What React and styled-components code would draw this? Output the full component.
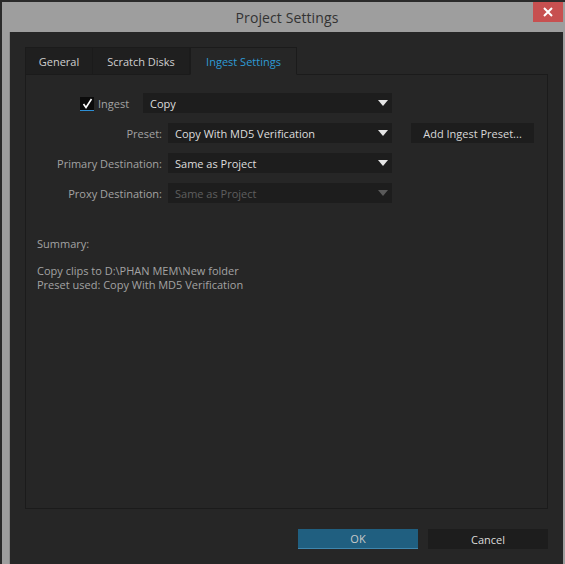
import React from "react";
import styled, { createGlobalStyle } from "styled-components";

const Global = createGlobalStyle`
  html, body { margin: 0; padding: 0; background: #2a2a2a; }
  body { font-family: "Open Sans", "Noto Sans", sans-serif; }
  * { box-sizing: border-box; }
`;

const Screen = styled.div`
  width: 565px;
  height: 564px;
  padding: 2px 0 0 2px;
  display: flex;
  overflow: hidden;
  background: #2a2a2a;
`;

const Window = styled.div`
  flex: 1;
  display: flex;
  flex-direction: column;
  background: #9e9e9e;
  padding: 0 2px 0 7px;
`;

const TitleBar = styled.div`
  height: 30px;
  position: relative;
  display: flex;
  align-items: center;
  justify-content: center;
  padding-left: 2px;
`;

const Title = styled.div`
  font-family: "Open Sans", sans-serif;
  font-size: 14px;
  color: #333333;
  letter-spacing: 0.1px;
`;

const CloseButton = styled.div`
  position: absolute;
  right: 0;
  top: 0;
  width: 30px;
  height: 20px;
  background: #c75050;
  display: flex;
  align-items: center;
  justify-content: center;
`;

const Content = styled.div`
  flex: 1;
  background: #262626;
  border-left: 1px solid #8a8a8a;
  padding: 15px 15px 15px 15px;
  display: flex;
  flex-direction: column;
`;

const TabBar = styled.div`
  display: flex;
  height: 27px;
`;

const Tab = styled.div`
  width: ${(p) => p.$w}px;
  display: flex;
  align-items: center;
  justify-content: center;
  font-size: 11px;
  background: ${(p) => (p.$active ? "#262626" : "#1f1f1f")};
  color: ${(p) => (p.$active ? "#2e9bd6" : "#cfcfcf")};
  border: 1px solid #1b1b1b;
  border-bottom: ${(p) => (p.$active ? "1px solid #262626" : "1px solid #1b1b1b")};
  border-left: ${(p) => (p.$first || p.$active ? "1px solid #1b1b1b" : "none")};
  margin-bottom: -1px;
  position: relative;
  z-index: 1;
`;

const Panel = styled.div`
  flex: 1;
  border: 1px solid #1b1b1b;
  padding: 18px 0 0 0;
  display: flex;
  flex-direction: column;
`;

const Rows = styled.div`
  display: flex;
  flex-direction: column;
  gap: 10px;
`;

const Row = styled.div`
  display: flex;
  align-items: center;
  height: 20px;
`;

const Label = styled.div`
  width: 136px;
  text-align: right;
  font-size: 11px;
  color: #a3a3a3;
  margin-right: 6px;
  white-space: nowrap;
`;

const CheckGroup = styled.label`
  width: 117px;
  display: flex;
  align-items: center;
  padding-left: 54px;
  gap: 4px;
  font-size: 11px;
  color: #a3a3a3;
`;

const CheckBox = styled.span`
  width: 14px;
  height: 14px;
  background: #0b0b0b;
  border-bottom: 1px solid #2d8fd5;
  display: flex;
  align-items: center;
  justify-content: center;
  margin-top: 1px;
`;

const Dropdown = styled.div`
  width: ${(p) => p.$w}px;
  height: 20px;
  background: #1d1d1d;
  display: flex;
  align-items: center;
  justify-content: space-between;
  padding: 0 4px 0 7px;
  font-size: 11px;
  color: ${(p) => (p.$disabled ? "#5f5f5f" : "#dedede")};
`;

const Arrow = styled.span`
  width: 0;
  height: 0;
  border-left: 5px solid transparent;
  border-right: 5px solid transparent;
  border-top: 6px solid ${(p) => (p.$disabled ? "#5a5a5a" : "#e6e6e6")};
`;

const SideButton = styled.div`
  width: 123px;
  height: 20px;
  margin-left: 19px;
  background: #1d1d1d;
  display: flex;
  align-items: center;
  justify-content: center;
  font-size: 11px;
  color: #d8d8d8;
`;

const Summary = styled.div`
  margin: 34px 0 0 11px;
  font-size: 11px;
  line-height: 13.5px;
  color: #a3a3a3;
  white-space: pre;
`;

const Footer = styled.div`
  display: flex;
  justify-content: flex-end;
  gap: 10px;
  padding-top: 20px;
`;

const FooterButton = styled.div`
  width: 120px;
  height: 20px;
  display: flex;
  align-items: center;
  justify-content: center;
  font-size: 11px;
  background: ${(p) => (p.$primary ? "#205f80" : "#1d1d1d")};
  color: ${(p) => (p.$primary ? "#c9c9c9" : "#dcdcdc")};
  border-bottom: ${(p) => (p.$primary ? "1px solid #3f86ad" : "none")};
`;

function Select({ value, width, disabled }) {
  return (
    <Dropdown $w={width} $disabled={disabled}>
      <span>{value}</span>
      <Arrow $disabled={disabled} />
    </Dropdown>
  );
}

export default function App() {
  return (
    <>
      <Global />
      <Screen>
        <Window>
          <TitleBar>
            <Title>Project Settings</Title>
            <CloseButton>
              <svg width="10" height="10" viewBox="0 0 10 10">
                <path d="M1 1 L9 9 M9 1 L1 9" stroke="#fff" strokeWidth="2" />
              </svg>
            </CloseButton>
          </TitleBar>
          <Content>
            <TabBar>
              <Tab $w={68} $first>General</Tab>
              <Tab $w={97}>Scratch Disks</Tab>
              <Tab $w={107} $active>Ingest Settings</Tab>
            </TabBar>
            <Panel>
              <Rows>
                <Row>
                  <CheckGroup>
                    <CheckBox>
                      <svg width="11" height="11" viewBox="0 0 11 11">
                        <path d="M1.5 6 L4 9.5 L9.5 1" stroke="#fff" strokeWidth="1.6" fill="none" />
                      </svg>
                    </CheckBox>
                    Ingest
                  </CheckGroup>
                  <Select value="Copy" width={249} />
                </Row>
                <Row>
                  <Label>Preset:</Label>
                  <Select value="Copy With MD5 Verification" width={224} />
                  <SideButton>Add Ingest Preset...</SideButton>
                </Row>
                <Row>
                  <Label>Primary Destination:</Label>
                  <Select value="Same as Project" width={224} />
                </Row>
                <Row>
                  <Label>Proxy Destination:</Label>
                  <Select value="Same as Project" width={224} disabled />
                </Row>
              </Rows>
              <Summary>
                {"Summary:\n\nCopy clips to D:\\PHAN MEM\\New folder\nPreset used: Copy With MD5 Verification"}
              </Summary>
            </Panel>
            <Footer>
              <FooterButton $primary>OK</FooterButton>
              <FooterButton>Cancel</FooterButton>
            </Footer>
          </Content>
        </Window>
      </Screen>
    </>
  );
}
